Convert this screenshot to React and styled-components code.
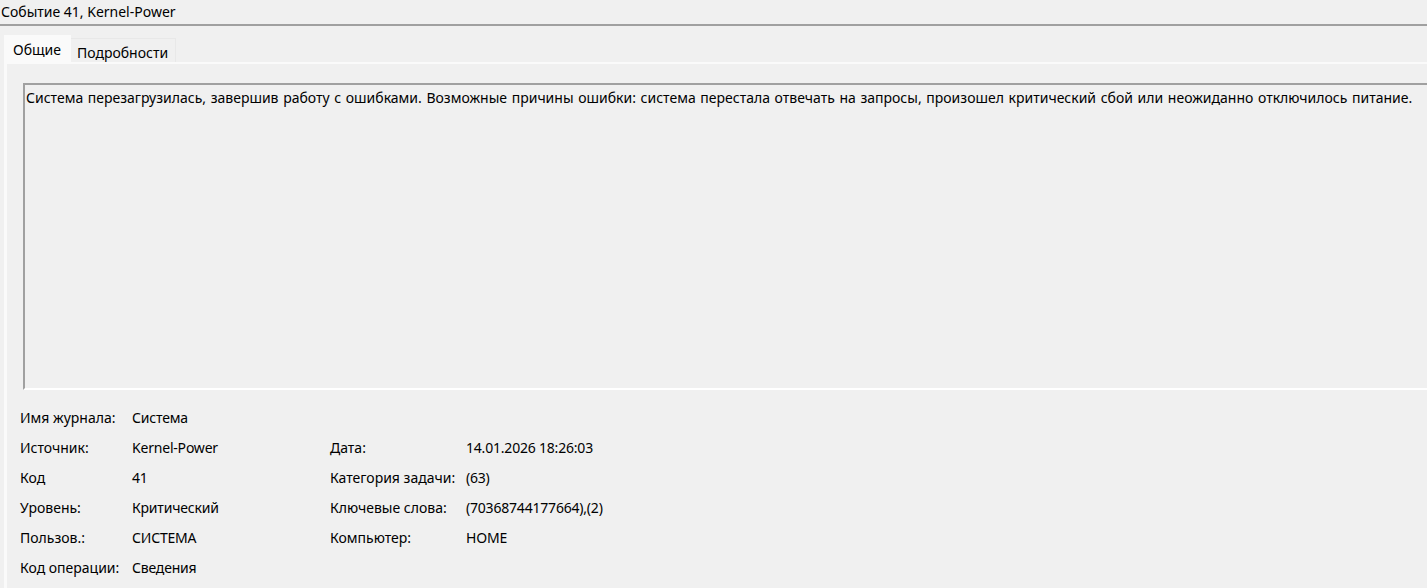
import React from 'react'
import styled, { createGlobalStyle } from 'styled-components'

const GlobalStyle = createGlobalStyle`
    html, body {
        margin: 0;
        padding: 0;
        background: #f0f0f0;
        font-family: "Noto Sans", "Liberation Sans", Arial, sans-serif;
        font-size: 14px;
        color: #000;
        overflow: hidden;
    }
`;

const leftRows = [
    ["Имя журнала:", "Система"],
    ["Источник:", "Kernel-Power"],
    ["Код", "41"],
    ["Уровень:", "Критический"],
    ["Пользов.:", "СИСТЕМА"],
    ["Код операции:", "Сведения"],
];

const rightRows = [
    null,
    ["Дата:", "14.01.2026 18:26:03"],
    ["Категория задачи:", "(63)"],
    ["Ключевые слова:", "(70368744177664),(2)"],
    ["Компьютер:", "HOME"],
    null,
];

const App = () => {
    return (
        <Window>
            <GlobalStyle />
            <TitleBar>Событие 41, Kernel-Power</TitleBar>
            <TabStrip>
                <Tab active>Общие</Tab>
                <Tab>Подробности</Tab>
            </TabStrip>
            <TabPanel>
                <Description>
                    Система перезагрузилась, завершив работу с ошибками. Возможные причины ошибки: система перестала отвечать на запросы, произошел критический сбой или неожиданно отключилось питание.
                </Description>
                <Details>
                    {leftRows.map((row, i) => (
                        <React.Fragment key={i}>
                            <Label>{row[0]}</Label>
                            <Value>{row[1]}</Value>
                            <Label>{rightRows[i] ? rightRows[i][0] : ""}</Label>
                            <Value>{rightRows[i] ? rightRows[i][1] : ""}</Value>
                        </React.Fragment>
                    ))}
                </Details>
            </TabPanel>
        </Window>
    )
}

const Window = styled.div`
    width: 1427px;
    height: 588px;
    display: flex;
    flex-direction: column;
    background: #f0f0f0;
`;

const TitleBar = styled.div`
    height: 25px;
    line-height: 24px;
    padding-left: 1px;
    border-bottom: 2px solid #a0a0a0;
    white-space: nowrap;
`;

const TabStrip = styled.div`
    display: flex;
    align-items: flex-end;
    height: 27px;
    margin-top: 9px;
    padding-left: 4px;
`;

const Tab = styled.div`
    height: ${p => p.active ? "27px" : "24px"};
    line-height: ${p => p.active ? "29px" : "27px"};
    padding: 0 ${p => p.active ? "10px 0 9px" : "7px 0 6px"};
    background: ${p => p.active ? "#fafafa" : "#f0f0f0"};
    border-top: ${p => p.active ? "none" : "1px solid #e8e8e8"};
    border-right: ${p => p.active ? "none" : "1px solid #e8e8e8"};
    box-sizing: border-box;
    white-space: nowrap;
`;

const TabPanel = styled.div`
    flex: 1;
    margin-left: 4px;
    padding: 19px 0 0 16px;
    border-top: 2px solid #fafafa;
    border-left: 3px solid #fafafa;
    display: flex;
    flex-direction: column;
`;

const Description = styled.div`
    height: 300px;
    padding: 3px 4px 0 1px;
    border-top: 2px solid #a0a0a0;
    border-left: 2px solid #a0a0a0;
    border-bottom: 2px solid #ffffff;
    white-space: nowrap;
    line-height: 20px;
    word-spacing: 1px;
`;

const Details = styled.div`
    display: grid;
    grid-template-columns: 112px 198px 136px 1fr;
    grid-auto-rows: 30px;
    padding: 18px 0 0 0;
    margin-left: -3px;
`;

const Label = styled.div`
    line-height: 20px;
`;

const Value = styled.div`
    line-height: 20px;
    letter-spacing: -0.2px;
`;

export default App;
